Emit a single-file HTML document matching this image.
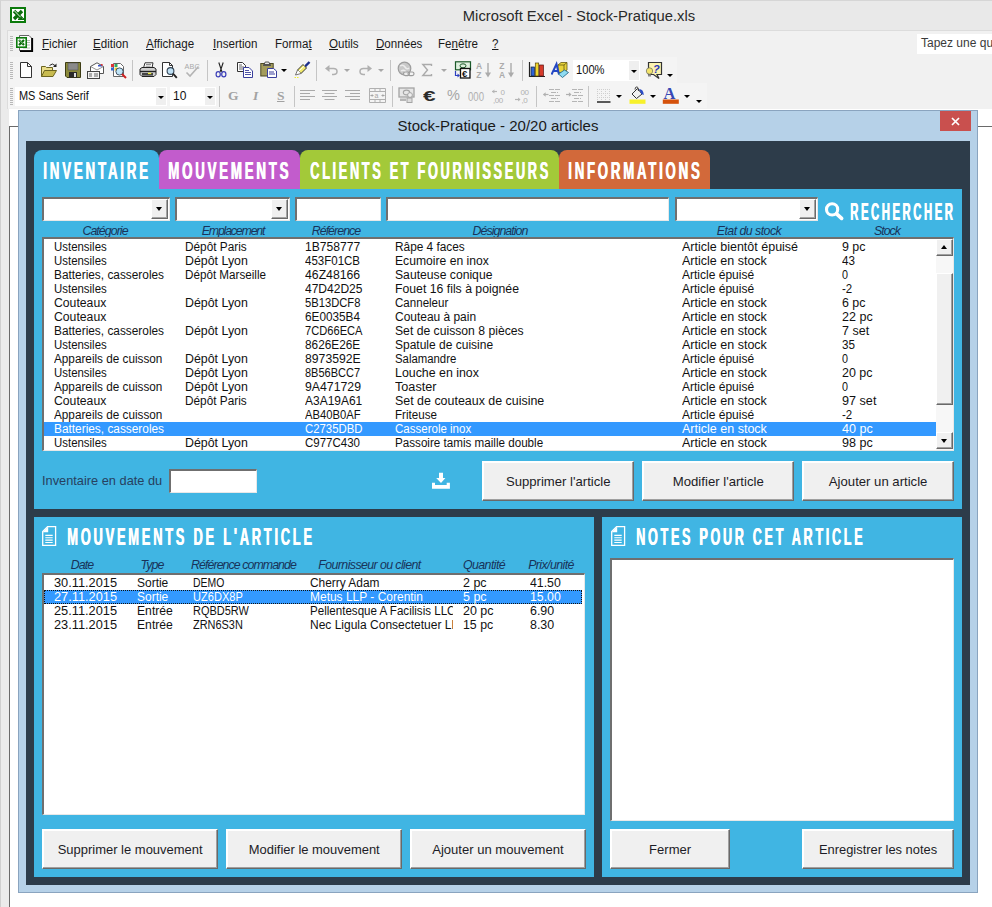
<!DOCTYPE html>
<html><head><meta charset="utf-8">
<style>
*{box-sizing:border-box;margin:0;padding:0}
html,body{width:992px;height:907px;overflow:hidden;background:#fff}
body{font-family:"Liberation Sans",sans-serif;position:relative;color:#000}
.abs{position:absolute}
#titlebar{left:0;top:0;width:992px;height:31px;background:#e9e9e9;border-top:1px solid #d6d6d6;border-left:1px solid #d2d2d2}
#title{left:0;top:0;width:992px;height:31px}
#chrome{left:7px;top:30px;width:985px;height:79px;background:#f1f1f1;border-left:1px solid #dcdcdc;border-top:1px solid #dcdcdc}
#leftframe{left:0;top:30px;width:9px;height:877px;background:#ebebeb;border-left:1px solid #cfcfcf}
.menu{top:37px;font-size:12px;color:#1a1a1a;white-space:nowrap;transform-origin:0 0;transform:scaleX(0.965)}
.menu u{text-decoration:underline;text-underline-offset:1px}
.grip{left:10px;width:3px;background:repeating-linear-gradient(to bottom,#b9b9b9 0,#b9b9b9 1px,transparent 1px,transparent 2px)}
.sep{width:1px;background:#c5c5c5}
.tbx{background:#fff;height:19px;font-size:12px;padding:2px 0 0 3px;white-space:nowrap;color:#111}
.dd{width:0;height:0;border-left:3px solid transparent;border-right:3px solid transparent;border-top:3px solid #000}
/* dialog */
#dlg{left:18px;top:110px;width:960px;height:783px;background:#b6d1e8;border:1px solid #8aa4bf}
#dlgtitle{left:18px;top:117px;width:960px;text-align:center;font-size:15px;color:#1a1a1a}
#close{left:940px;top:111px;width:31px;height:20px;background:#c9504e}
#dark{left:26px;top:141px;width:944px;height:744px;background:#2d3c4a}
.blue{background:#40b5e3}
.tab{top:150px;height:39px;border-radius:8px 8px 0 0}
.hl{color:#fff;font-weight:bold;white-space:nowrap;transform-origin:0 0;line-height:1;letter-spacing:5.0px;text-shadow:1.0px 0 0 #fff}
.sunk{background:#fff;border-top:2px solid #6f6f6f;border-left:2px solid #6f6f6f;border-right:1px solid #e8e8e8;border-bottom:1px solid #e8e8e8}
.cbtn{top:0;right:1px;width:17px;height:20px;background:#f0f0f0;border:1px solid #fff;border-right-color:#6a6a6a;border-bottom-color:#6a6a6a;box-shadow:inset -1px -1px 0 #a3a3a3}
.cbtn i{position:absolute;left:4px;top:7px;width:0;height:0;border-left:3.5px solid transparent;border-right:3.5px solid transparent;border-top:4px solid #000}
.lab{font-style:italic;font-size:12.4px;color:#18335a;white-space:nowrap;text-align:center;letter-spacing:-0.95px}
.lb{font-size:12px;line-height:14px;white-space:nowrap;color:#111}
.lb div{position:absolute;left:0;height:14px}
.lb span{position:absolute;top:0;transform-origin:0 0}
.btn{background:#f0f0f0;border:1px solid #fff;border-right-color:#696969;border-bottom-color:#696969;font-size:13.1px;color:#1c1c26;text-align:center;white-space:nowrap;box-shadow:inset -1px -1px 0 #a0a0a0,inset 1px 1px 0 #fff}
.sb{width:17px;background:#f0f0f0;border:1px solid #fff;border-right-color:#696969;border-bottom-color:#696969;box-shadow:inset -1px -1px 0 #a0a0a0}
.sb i{position:absolute;left:4px;width:0;height:0;border-left:3.5px solid transparent;border-right:3.5px solid transparent}
.sb i.up{top:5px;border-bottom:4px solid #000}
.sb i.dn{top:6px;border-top:4px solid #000}
.btn span{display:inline-block}
</style></head><body>
<!-- EXCEL CHROME -->
<div class="abs" id="titlebar"></div>
<div class="abs" id="leftframe"></div>
<div class="abs" id="chrome"></div>
<div class="abs" style="left:8px;top:57px;width:669px;height:26px;background:#f4f4f4"></div>
<div class="abs" style="left:8px;top:83px;width:699px;height:25px;background:#f4f4f4"></div>
<svg class="abs" style="left:10px;top:7px" width="16" height="16" viewBox="0 0 16 16"><rect width="16" height="16" fill="#0b7a0b"/><rect x="2" y="2" width="12" height="12" fill="#fff"/><path d="M4 4 L12 12 M12 4 L4 12" stroke="#0b6e0b" stroke-width="3.4"/><path d="M8 12.2 H14 V11" stroke="#0b6e0b" stroke-width="1.6" fill="none"/><path d="M4.2 3.6 L10.6 10.2" stroke="#fff" stroke-width="0.9"/></svg>
<div class="abs" id="title" style="text-align:center;font-size:15.4px;line-height:31px;color:#2a2a2a;padding-left:166px;transform:scaleX(0.96);transform-origin:579px 0">Microsoft Excel - Stock-Pratique.xls</div>
<div class="abs grip" style="top:36px;height:15px"></div>
<div class="abs grip" style="top:62px;height:17px"></div>
<div class="abs grip" style="top:88px;height:17px"></div>
<svg class="abs" style="left:16px;top:34px" width="18" height="19" viewBox="0 0 18 19"><path d="M3.5 1.5 H13 L15.5 4 V16.5 H3.5 Z" fill="#fbfbfb" stroke="#555" stroke-width="0.9"/><path d="M4 17.2 H16.2 V4" stroke="#000" stroke-width="1.8" fill="none"/><path d="M11 6.5h3M11 8.5h3M11 11h3M7 14h7" stroke="#aab2aa" stroke-width="0.9"/><rect x="0.8" y="3.8" width="9.4" height="9.4" fill="#fff" stroke="#0b7a0b" stroke-width="1.6"/><path d="M3 6 L8 11 M8 6 L3 11" stroke="#0b6e0b" stroke-width="2.2"/><path d="M3.2 5.8 L7 9.6" stroke="#fff" stroke-width="0.6"/></svg>
<div class="abs menu" style="left:42px"><u>F</u>ichier</div>
<div class="abs menu" style="left:93px"><u>E</u>dition</div>
<div class="abs menu" style="left:146px"><u>A</u>ffichage</div>
<div class="abs menu" style="left:213px"><u>I</u>nsertion</div>
<div class="abs menu" style="left:275px">Forma<u>t</u></div>
<div class="abs menu" style="left:329px"><u>O</u>utils</div>
<div class="abs menu" style="left:376px"><u>D</u>onnées</div>
<div class="abs menu" style="left:438px">Fe<u>n</u>être</div>
<div class="abs menu" style="left:492px"><u>?</u></div>
<div class="abs" style="left:917px;top:34px;width:75px;height:20px;background:#fff"></div>
<div class="abs" style="left:921px;top:36px;font-size:12px;color:#3a3a3a;white-space:nowrap">Tapez une qu</div>
<!-- separators row1 -->
<div class="abs sep" style="left:132px;top:60px;height:21px"></div>
<div class="abs sep" style="left:207px;top:60px;height:21px"></div>
<div class="abs sep" style="left:316px;top:60px;height:21px"></div>
<div class="abs sep" style="left:390px;top:60px;height:21px"></div>
<div class="abs sep" style="left:522px;top:60px;height:21px"></div>
<!-- separators row2 -->
<div class="abs sep" style="left:219px;top:86px;height:21px"></div>
<div class="abs sep" style="left:294px;top:86px;height:21px"></div>
<div class="abs sep" style="left:392px;top:86px;height:21px"></div>
<div class="abs sep" style="left:536px;top:86px;height:21px"></div>
<div class="abs sep" style="left:588px;top:86px;height:21px"></div>
<!-- combos -->
<div class="abs tbx" style="left:15px;top:87px;width:152px"><span style="display:inline-block;font-size:13px;transform:scaleX(0.84);transform-origin:0 0;margin-left:1px;margin-top:-1px">MS Sans Serif</span></div>
<div class="abs" style="left:156px;top:88px;width:10px;height:17px;background:#efefef"></div><div class="abs dd" style="left:158px;top:96px"></div>
<div class="abs tbx" style="left:170px;top:87px;width:46px">10</div>
<div class="abs" style="left:205px;top:88px;width:10px;height:17px;background:#efefef"></div><div class="abs dd" style="left:207px;top:96px"></div>
<div class="abs tbx" style="left:573px;top:60px;width:67px;height:21px;padding-top:3px"><span style="display:inline-block;transform:scaleX(0.93);transform-origin:0 0">100%</span></div>
<div class="abs" style="left:629px;top:61px;width:10px;height:19px;background:#efefef"></div><div class="abs dd" style="left:631px;top:70px"></div>
<!-- dropdown arrows -->
<div class="abs dd" style="left:281px;top:69px"></div>
<div class="abs dd" style="left:344px;top:69px;border-top-color:#a8a8a8"></div>
<div class="abs dd" style="left:378px;top:69px;border-top-color:#a8a8a8"></div>
<div class="abs dd" style="left:441px;top:69px;border-top-color:#a8a8a8"></div>
<div class="abs dd" style="left:667px;top:74px"></div>
<div class="abs dd" style="left:616px;top:95px"></div>
<div class="abs dd" style="left:650px;top:95px"></div>
<div class="abs dd" style="left:684px;top:95px"></div>
<div class="abs dd" style="left:696px;top:100px"></div>
<!-- row1 icons -->
<svg class="abs" style="left:19px;top:62px" width="16" height="16" viewBox="0 0 16 16"><path d="M1.5 0.5 H8.5 L12.5 4.5 V15.5 H1.5 Z" fill="#fff" stroke="#333"/><path d="M8.5 0.5 V4.5 H12.5" fill="none" stroke="#333"/></svg>
<svg class="abs" style="left:40px;top:62px" width="18" height="16" viewBox="0 0 18 16"><path d="M1.5 14.5 V4.5 H5.5 L6.5 5.5 H12.5 V8" fill="#e9dc8a" stroke="#6b6420"/><path d="M1.5 14.5 L4.5 8.5 H16.5 L13 14.5 Z" fill="#c8bb4f" stroke="#6b6420"/><path d="M9.5 3.5 Q12.5 0.5 15 3.5" fill="none" stroke="#222"/><path d="M16.5 1.5 V5 H13 Z" fill="#222"/></svg>
<svg class="abs" style="left:65px;top:62px" width="16" height="16" viewBox="0 0 16 16"><path d="M0.5 0.5 H15.5 V15.5 H2 L0.5 14 Z" fill="#8b8a3b" stroke="#3d3c14"/><rect x="3" y="1" width="10" height="7" fill="#8a8a8a" stroke="#555" stroke-width="0.6"/><rect x="4" y="10" width="8" height="5.5" fill="#2a2a2a"/><rect x="9" y="11" width="2" height="4" fill="#ddd"/></svg>
<svg class="abs" style="left:87px;top:62px" width="18" height="17" viewBox="0 0 18 17"><path d="M3.5 9 V4.5 L10 0.8 L16.5 4.5 V11.5 H12" fill="#fff" stroke="#555"/><path d="M3.5 4.5 L10 8 L16.5 4.5" fill="none" stroke="#777" stroke-width="0.8"/><rect x="11" y="3" width="4" height="1.5" fill="#3a56c8"/><rect x="14" y="2" width="1.6" height="1.6" fill="#d33"/><rect x="0.5" y="9.5" width="12" height="7" fill="#f4f4f4" stroke="#444"/><path d="M2 12h3M2 14h3M7 12h4M7 14h4" stroke="#555" stroke-width="0.9"/></svg>
<svg class="abs" style="left:110px;top:62px" width="18" height="17" viewBox="0 0 18 17"><path d="M3.5 1.5 H10.5 L13.5 4.5 V14.5 H3.5 Z" fill="#fff" stroke="#666"/><rect x="1" y="2" width="3" height="3" fill="#d33"/><rect x="4.5" y="2" width="3" height="3" fill="#3a6"/><rect x="1" y="5.5" width="3" height="3" fill="#36c"/><rect x="4.5" y="5.5" width="3" height="3" fill="#ec3"/><circle cx="9.5" cy="9.5" r="3.6" fill="#bfe4f7" stroke="#456"/><path d="M12 12 L16 16" stroke="#c22" stroke-width="2"/></svg>
<svg class="abs" style="left:139px;top:62px" width="18" height="16" viewBox="0 0 18 16"><path d="M4.5 6 L6 0.8 H14 L13 6" fill="#fff" stroke="#333"/><path d="M7 2.5h5M6.6 4.2h5" stroke="#777" stroke-width="0.8"/><path d="M1 7 L3 5.5 H15 L17 7 V12.5 L15 14.5 H3 L1 12.5 Z" fill="#cfcfcf" stroke="#222"/><path d="M1 9.5 H17" stroke="#222" stroke-width="1.4"/><rect x="3" y="11" width="11" height="2.6" fill="#444"/><rect x="9" y="10.8" width="3.2" height="1.3" fill="#ee3"/></svg>
<svg class="abs" style="left:161px;top:62px" width="18" height="17" viewBox="0 0 18 17"><path d="M1.5 0.5 H8.5 L11.5 3.5 V14.5 H1.5 Z" fill="#fff" stroke="#333"/><path d="M8.5 0.5 V3.5 H11.5" fill="none" stroke="#333"/><circle cx="9.5" cy="9" r="3.4" fill="#bfe0f4" stroke="#345" stroke-width="1.1"/><path d="M12 11.7 L15.8 15.8" stroke="#222" stroke-width="1.9"/></svg>
<svg class="abs" style="left:184px;top:61px" width="18" height="17" viewBox="0 0 18 17"><text x="0.5" y="7.5" font-family="Liberation Sans" font-size="7.2" fill="#a9a9a9" letter-spacing="0.2">ABC</text><path d="M2.5 11.5 L6 15 L14.5 5.5" fill="none" stroke="#b4b4b4" stroke-width="1.6"/></svg>
<svg class="abs" style="left:215px;top:62px" width="12" height="16" viewBox="0 0 12 16"><path d="M3.8 0.5 L7 10 M8.2 0.5 L5 10" stroke="#222" stroke-width="1.1" fill="none"/><ellipse cx="3.2" cy="12.3" rx="2.1" ry="2.6" fill="none" stroke="#3b3fb8" stroke-width="1.2"/><ellipse cx="8.8" cy="12.3" rx="2.1" ry="2.6" fill="none" stroke="#3b3fb8" stroke-width="1.2"/></svg>
<svg class="abs" style="left:237px;top:62px" width="17" height="16" viewBox="0 0 17 16"><path d="M0.5 0.5 H5.5 L8.5 3.5 V9.5 H0.5 Z" fill="#fff" stroke="#333"/><path d="M2 3h3M2 5h5M2 7h5" stroke="#555" stroke-width="0.9"/><path d="M6.5 5.5 H12 L15.5 9 V15.5 H6.5 Z" fill="#fff" stroke="#3a3f9c"/><path d="M8 8.5h4M8 10.5h6M8 12.5h6" stroke="#3a3f9c" stroke-width="0.9"/></svg>
<svg class="abs" style="left:260px;top:61px" width="18" height="17" viewBox="0 0 18 17"><rect x="0.8" y="2.5" width="12.4" height="12.5" fill="#a39c5c" stroke="#4d4a26"/><path d="M4 3.5 L5.2 1 H8.8 L10 3.5 Z" fill="#e6e6e6" stroke="#333" stroke-width="0.8"/><rect x="3" y="3.4" width="8" height="1.6" fill="#555"/><path d="M7.5 7.5 H13.5 L16.5 10 V16.5 H7.5 Z" fill="#fff" stroke="#3a3f9c"/><path d="M9 11h5M9 13h6" stroke="#3a3f9c" stroke-width="1"/></svg>
<svg class="abs" style="left:294px;top:61px" width="18" height="18" viewBox="0 0 18 18"><path d="M11 5.5 L15.5 1" stroke="#1b2f8c" stroke-width="2.4"/><path d="M3.5 9 L9 3.5 L12.5 7 L7 12.5 Z" fill="#f2ea6a" stroke="#333"/><path d="M4.5 10.5 L10.5 4.8" stroke="#fff" stroke-width="1"/><path d="M3.5 9 L1.5 14 L7 12.5" fill="#fff" stroke="#555" stroke-width="0.8"/><path d="M0.5 16.5h5" stroke="#ee3" stroke-width="1" stroke-dasharray="1.5 1"/></svg>
<svg class="abs" style="left:324px;top:63px" width="16" height="14" viewBox="0 0 16 14"><path d="M3.5 5.5 H9.5 Q13 5.5 13 8.5 Q13 11.5 9.5 11.5 H8" fill="none" stroke="#b0b0b0" stroke-width="1.5"/><path d="M1 5.5 L5.5 2 V9 Z" fill="#b0b0b0"/></svg>
<svg class="abs" style="left:357px;top:63px" width="16" height="14" viewBox="0 0 16 14"><path d="M12.5 5.5 H6.5 Q3 5.5 3 8.5 Q3 11.5 6.5 11.5 H8" fill="none" stroke="#b0b0b0" stroke-width="1.5"/><path d="M15 5.5 L10.5 2 V9 Z" fill="#b0b0b0"/></svg>
<svg class="abs" style="left:397px;top:61px" width="18" height="18" viewBox="0 0 18 18"><circle cx="7.5" cy="7.5" r="6.3" fill="#c9c9c9" stroke="#9d9d9d" stroke-width="1.2"/><path d="M3 5 Q6 3 8 6 T12 7 M4 10 Q7 8 9 11" stroke="#ececec" stroke-width="1.5" fill="none"/><rect x="6.5" y="11" width="6" height="3.6" rx="1.8" fill="#ededed" stroke="#9d9d9d" stroke-width="1.2"/><rect x="11" y="11" width="6" height="3.6" rx="1.8" fill="none" stroke="#9d9d9d" stroke-width="1.2"/></svg>
<svg class="abs" style="left:421px;top:62px" width="13" height="16" viewBox="0 0 13 16"><path d="M10.5 4 V2.5 H1.8 L6.5 8 L1.8 13.5 H10.5 V12" fill="none" stroke="#ababab" stroke-width="1.4"/></svg>
<svg class="abs" style="left:453px;top:61px" width="19" height="18" viewBox="0 0 19 18"><rect x="2.5" y="0.8" width="15" height="8" fill="#dff0df" stroke="#1c5a2a" stroke-width="1.2"/><ellipse cx="10" cy="4.8" rx="3" ry="2" fill="none" stroke="#1c5a2a"/><rect x="7.5" y="7.5" width="9.5" height="9.5" fill="#fff" stroke="#111" stroke-width="1.3"/><text x="9" y="15.8" font-family="Liberation Sans" font-weight="bold" font-size="9.5" fill="#111">€</text><path d="M2.5 10 V14.5 H5" fill="none" stroke="#2b3fc0" stroke-width="1.2"/><path d="M4.5 12.5 L7 14.5 L4.5 16.5 Z" fill="#2b3fc0"/></svg>
<svg class="abs" style="left:476px;top:61px" width="17" height="18" viewBox="0 0 17 18"><text x="0" y="8" font-family="Liberation Sans" font-weight="bold" font-size="8.5" fill="#ababab">A</text><text x="0.3" y="16.5" font-family="Liberation Sans" font-weight="bold" font-size="8.5" fill="#ababab">Z</text><path d="M12 2 V13" stroke="#ababab" stroke-width="1.4"/><path d="M9 11.5 H15 L12 16.5 Z" fill="#ababab"/></svg>
<svg class="abs" style="left:499px;top:61px" width="17" height="18" viewBox="0 0 17 18"><text x="0.3" y="8" font-family="Liberation Sans" font-weight="bold" font-size="8.5" fill="#ababab">Z</text><text x="0" y="16.5" font-family="Liberation Sans" font-weight="bold" font-size="8.5" fill="#ababab">A</text><path d="M12 2 V13" stroke="#ababab" stroke-width="1.4"/><path d="M9 11.5 H15 L12 16.5 Z" fill="#ababab"/></svg>
<svg class="abs" style="left:528px;top:61px" width="18" height="17" viewBox="0 0 18 17"><path d="M1.5 1 V15.5 H17" fill="none" stroke="#222" stroke-width="1.2"/><rect x="3" y="6" width="3.4" height="9" fill="#2d62d6" stroke="#123" stroke-width="0.7"/><rect x="7.3" y="2" width="3.4" height="13" fill="#f0d529" stroke="#541" stroke-width="0.7"/><rect x="11.6" y="4" width="3.8" height="11" fill="#d63a2a" stroke="#511" stroke-width="0.7"/></svg>
<svg class="abs" style="left:551px;top:61px" width="19" height="18" viewBox="0 0 19 18"><path d="M7 4 L10 1.5 H16 V9 L13 11.5 H7 Z" fill="#e8d33a" stroke="#665a10" stroke-width="0.8"/><path d="M7 4 H13 V11.5 M13 4 L16 1.5" fill="none" stroke="#665a10" stroke-width="0.8"/><path d="M0.5 13.5 L5.5 3 L8 13.5 M2.3 10 H7" fill="none" stroke="#2447c4" stroke-width="2"/><path d="M7.5 13 L13.5 9 L17.5 11.5 L11.5 16.5 Z" fill="#8fdcf2" stroke="#2a6d8c" stroke-width="0.9"/></svg>
<svg class="abs" style="left:645px;top:61px" width="19" height="19" viewBox="0 0 19 19"><path d="M3.5 1.5 H16.5 V13.5 H12 L14 17.5 L8.5 13.5 H3.5 Z" fill="#fbf3b0" stroke="#333" stroke-width="1.2"/><text x="8" y="11.5" font-family="Liberation Sans" font-weight="bold" font-style="italic" font-size="11" fill="#2a35b8">?</text><circle cx="4.5" cy="10" r="3.2" fill="#f3e36a" stroke="#776" stroke-width="0.8"/><path d="M3 13.5 h3 v2 h-3z" fill="#888"/></svg>
<!-- row2 icons -->
<div class="abs" style="left:228px;top:88px;font:bold 13.5px 'Liberation Serif',serif;color:#a2a2a2">G</div>
<div class="abs" style="left:253px;top:88px;font:italic bold 13.5px 'Liberation Serif',serif;color:#a2a2a2">I</div>
<div class="abs" style="left:277px;top:88px;font:bold 13.5px 'Liberation Serif',serif;color:#a2a2a2;text-decoration:underline">S</div>
<svg class="abs" style="left:300px;top:89px" width="16" height="13" viewBox="0 0 16 13"><path d="M0 1.5h15M0 4.5h10M0 7.5h15M0 10.5h10" stroke="#a9a9a9" stroke-width="1.1"/></svg>
<svg class="abs" style="left:322px;top:89px" width="16" height="13" viewBox="0 0 16 13"><path d="M0 1.5h15M2.5 4.5h10M0 7.5h15M2.5 10.5h10" stroke="#a9a9a9" stroke-width="1.1"/></svg>
<svg class="abs" style="left:345px;top:89px" width="16" height="13" viewBox="0 0 16 13"><path d="M0 1.5h15M5 4.5h10M0 7.5h15M5 10.5h10" stroke="#a9a9a9" stroke-width="1.1"/></svg>
<svg class="abs" style="left:369px;top:88px" width="18" height="15" viewBox="0 0 18 15"><path d="M0.5 0.5h16v14h-16zM0.5 3.5h16M0.5 11.5h16M6 0.5v3M11 0.5v3M6 11.5v3M11 11.5v3" fill="none" stroke="#b0b0b0"/><text x="5.5" y="10" font-family="Liberation Sans" font-size="7" fill="#a5a5a5">a</text><path d="M1.5 7.5h3M12.5 7.5h3" stroke="#a5a5a5"/><path d="M1.5 7.5l2-1.6v3.2zM15.5 7.5l-2-1.6v3.2z" fill="#a5a5a5"/></svg>
<svg class="abs" style="left:398px;top:87px" width="19" height="17" viewBox="0 0 19 17"><rect x="1" y="1" width="15" height="9" fill="#e6e6e6" stroke="#a4a4a4" stroke-width="1.3"/><ellipse cx="8.5" cy="5.5" rx="3.2" ry="2.4" fill="none" stroke="#a4a4a4" stroke-width="1.1"/><circle cx="12" cy="8" r="2.4" fill="#eee" stroke="#a4a4a4"/><rect x="2" y="11.5" width="6" height="2.5" fill="#b5b5b5"/><rect x="9" y="11" width="5" height="4.5" fill="#ddd" stroke="#a4a4a4"/></svg>
<div class="abs" style="left:423px;top:87px;font:bold 15px 'Liberation Sans',sans-serif;color:#2a2a2a;transform:scaleX(1.5);transform-origin:0 0">€</div>
<div class="abs" style="left:447px;top:87px;font:14.5px 'Liberation Sans',sans-serif;color:#a6a6a6">%</div>
<div class="abs" style="left:468px;top:90px;font:12px 'Liberation Sans',sans-serif;color:#b0b0b0;transform:scaleX(0.8);transform-origin:0 0">000</div>
<svg class="abs" style="left:491px;top:87px" width="19" height="17" viewBox="0 0 19 17"><path d="M1 4.5h5" stroke="#b5b5b5" stroke-width="1.2"/><path d="M1 4.5l2.4-2v4z" fill="#b5b5b5"/><text x="9.5" y="7.5" font-family="Liberation Sans" font-size="8" fill="#b0b0b0">0</text><text x="2" y="16" font-family="Liberation Sans" font-size="8" fill="#b0b0b0" letter-spacing="-0.4">,00</text></svg>
<svg class="abs" style="left:514px;top:87px" width="19" height="17" viewBox="0 0 19 17"><text x="6.5" y="7.5" font-family="Liberation Sans" font-size="8" fill="#b0b0b0" letter-spacing="-0.4">00</text><path d="M1 12.5h5" stroke="#b5b5b5" stroke-width="1.2"/><path d="M6.5 12.5l-2.4-2v4z" fill="#b5b5b5"/><text x="7.5" y="16" font-family="Liberation Sans" font-size="8" fill="#b0b0b0" letter-spacing="-0.4">,0</text></svg>
<svg class="abs" style="left:543px;top:88px" width="18" height="15" viewBox="0 0 18 15"><path d="M6 1.5h11M8 4.5h7M6 7.5h11M8 10.5h7M6 13.5h11" stroke="#b5b5b5" stroke-width="1.1" stroke-dasharray="5 1"/><path d="M0.5 6.5h5" stroke="#b0b0b0" stroke-width="1.2"/><path d="M0 6.5l2.6-2.2v4.4z" fill="#b0b0b0"/></svg>
<svg class="abs" style="left:566px;top:88px" width="18" height="15" viewBox="0 0 18 15"><path d="M6 1.5h11M8 4.5h7M6 7.5h11M8 10.5h7M6 13.5h11" stroke="#b5b5b5" stroke-width="1.1" stroke-dasharray="5 1"/><path d="M0 6.5h5" stroke="#b0b0b0" stroke-width="1.2"/><path d="M5.5 6.5l-2.6-2.2v4.4z" fill="#b0b0b0"/></svg>
<svg class="abs" style="left:597px;top:88px" width="15" height="16" viewBox="0 0 15 16"><path d="M0.5 1v12M4.5 1v12M8.5 1v12M12.5 1v12M0 1.5h13M0 5.5h13M0 9.5h13" stroke="#cfcfcf" stroke-width="1" stroke-dasharray="1 1"/><path d="M0 14h13.5" stroke="#333" stroke-width="1.6"/></svg>
<svg class="abs" style="left:629px;top:86px" width="18" height="19" viewBox="0 0 18 19"><path d="M3 8 L8.5 2.5 L13 8 L7.5 12.5 Z" fill="#f2f2f2" stroke="#333" stroke-width="1"/><path d="M6 3.5 Q6 0.8 8 0.8 Q9.5 0.8 9.5 5" fill="none" stroke="#333" stroke-width="0.9"/><path d="M10 3 Q14.5 3 14.8 9 L12.3 8 Z" fill="#2b4cc6"/><rect x="0.5" y="13.5" width="16" height="4.3" fill="#f7f12b"/></svg>
<svg class="abs" style="left:662px;top:86px" width="18" height="19" viewBox="0 0 18 19"><text x="1.5" y="12.5" font-family="Liberation Serif" font-weight="bold" font-size="16.5" fill="#3848b4">A</text><rect x="0.8" y="13.5" width="16" height="4.3" fill="#d5520c"/></svg>


<!-- sheet behind -->
<div class="abs" style="left:10px;top:109px;width:982px;height:798px;background:#fff"></div>
<div class="abs" style="left:9px;top:126px;width:983px;height:781px;border-left:1px solid #6a6a6a;border-top:1px solid #6a6a6a"></div>
<!-- DIALOG -->
<div class="abs" id="dlg"></div>
<div class="abs" id="dlgtitle">Stock-Pratique - 20/20 articles</div>
<div class="abs" id="close"><svg width="31" height="20" viewBox="0 0 31 20"><path d="M12 7 L19 14 M19 7 L12 14" stroke="#fff" stroke-width="1.7" fill="none"/></svg></div>
<div class="abs" id="dark"></div>
<div class="abs blue tab" style="left:34px;width:125px"></div>
<div class="abs tab" style="left:159px;width:141px;background:#c25ccc"></div>
<div class="abs tab" style="left:300px;width:259px;background:#a3c939"></div>
<div class="abs tab" style="left:559px;width:151px;background:#d2693a"></div>

<div class="abs blue" style="left:34px;top:189px;width:928px;height:320px"></div>
<div class="abs blue" style="left:34px;top:517px;width:560px;height:360px"></div>
<div class="abs blue" style="left:602px;top:517px;width:360px;height:360px"></div>
<div class="abs hl" id="h1" style="left:43.39px;top:158.8px;font-size:24px;transform:scaleX(0.5561)">INVENTAIRE</div>
<div class="abs hl" id="h2" style="left:168.49px;top:158.7px;font-size:24px;transform:scaleX(0.554)">MOUVEMENTS</div>
<div class="abs hl" id="h3" style="left:309.97px;top:158.7px;font-size:24px;transform:scaleX(0.5318)">CLIENTS ET FOURNISSEURS</div>
<div class="abs hl" id="h4" style="left:568.3px;top:158.7px;font-size:24px;transform:scaleX(0.5511)">INFORMATIONS</div>
<div class="abs hl" id="h5" style="left:849.9px;top:200.7px;font-size:22.5px;transform:scale(0.5039,1.035)">RECHERCHER</div>
<div class="abs hl" id="h6" style="left:66.65px;top:526.0px;font-size:23.5px;transform:scaleX(0.549)">MOUVEMENTS DE L'ARTICLE</div>
<div class="abs hl" id="h7" style="left:635.83px;top:526.0px;font-size:23.5px;transform:scaleX(0.5371)">NOTES POUR CET ARTICLE</div>
<!-- filters -->
<div class="abs sunk" style="left:42px;top:197px;width:128px;height:24px"><div class="abs cbtn"><i></i></div></div>
<div class="abs sunk" style="left:175px;top:197px;width:115px;height:24px"><div class="abs cbtn"><i></i></div></div>
<div class="abs sunk" style="left:295px;top:197px;width:86px;height:24px"></div>
<div class="abs sunk" style="left:386px;top:197px;width:283px;height:24px"></div>
<div class="abs sunk" style="left:675px;top:197px;width:143px;height:24px"><div class="abs cbtn"><i></i></div></div>
<svg class="abs" style="left:824px;top:202px" width="21" height="20" viewBox="0 0 21 20"><circle cx="8.1" cy="7.4" r="5.6" fill="none" stroke="#fff" stroke-width="3.1"/><path d="M12.6 11.8 L17.6 16.4" stroke="#fff" stroke-width="3.7" stroke-linecap="round"/></svg>
<div class="abs lab" style="left:55px;top:224px;width:100px">Catégorie</div>
<div class="abs lab" style="left:183px;top:224px;width:100px;letter-spacing:-1.2px">Emplacement</div>
<div class="abs lab" style="left:286px;top:224px;width:100px">Référence</div>
<div class="abs lab" style="left:450px;top:224px;width:100px">Désignation</div>
<div class="abs lab" style="left:699px;top:224px;width:100px;letter-spacing:-0.55px">Etat du stock</div>
<div class="abs lab" style="left:837px;top:224px;width:100px">Stock</div>
<!-- list -->
<div class="abs sunk lb" style="left:42px;top:237px;width:912px;height:214px">
<div style="top:1px;width:892px"><span style="left:10px;transform:scaleX(0.952)">Ustensiles</span><span style="left:141px;transform:scaleX(0.984)">Dépôt Paris</span><span style="left:261px;transform:scaleX(1.009)">1B758777</span><span style="left:351px;transform:scaleX(0.987)">Râpe 4 faces</span><span style="left:638px;transform:scaleX(1.042)">Article bientôt épuisé</span><span style="left:798px;transform:scaleX(1.036)">9 pc</span></div>
<div style="top:15px;width:892px"><span style="left:10px;transform:scaleX(0.952)">Ustensiles</span><span style="left:141px;transform:scaleX(1.032)">Dépôt Lyon</span><span style="left:261px;transform:scaleX(0.959)">453F01CB</span><span style="left:351px;transform:scaleX(1.012)">Ecumoire en inox</span><span style="left:638px;transform:scaleX(1.043)">Article en stock</span><span style="left:798px;transform:scaleX(0.973)">43</span></div>
<div style="top:29px;width:892px"><span style="left:10px;transform:scaleX(0.988)">Batteries, casseroles</span><span style="left:141px;transform:scaleX(0.972)">Dépôt Marseille</span><span style="left:261px;transform:scaleX(1.021)">46Z48166</span><span style="left:351px;transform:scaleX(1.014)">Sauteuse conique</span><span style="left:638px;transform:scaleX(1.001)">Article épuisé</span><span style="left:798px;transform:scaleX(0.897)">0</span></div>
<div style="top:43px;width:892px"><span style="left:10px;transform:scaleX(0.952)">Ustensiles</span><span style="left:261px;transform:scaleX(1.002)">47D42D25</span><span style="left:351px;transform:scaleX(1.021)">Fouet 16 fils à poignée</span><span style="left:638px;transform:scaleX(1.001)">Article épuisé</span><span style="left:798px;transform:scaleX(0.956)">-2</span></div>
<div style="top:57px;width:892px"><span style="left:10px;transform:scaleX(1.018)">Couteaux</span><span style="left:141px;transform:scaleX(1.032)">Dépôt Lyon</span><span style="left:261px;transform:scaleX(0.933)">5B13DCF8</span><span style="left:351px;transform:scaleX(0.963)">Canneleur</span><span style="left:638px;transform:scaleX(1.043)">Article en stock</span><span style="left:798px;transform:scaleX(1.036)">6 pc</span></div>
<div style="top:71px;width:892px"><span style="left:10px;transform:scaleX(1.018)">Couteaux</span><span style="left:261px;transform:scaleX(0.981)">6E0035B4</span><span style="left:351px;transform:scaleX(0.996)">Couteau à pain</span><span style="left:638px;transform:scaleX(1.043)">Article en stock</span><span style="left:798px;transform:scaleX(1.046)">22 pc</span></div>
<div style="top:85px;width:892px"><span style="left:10px;transform:scaleX(0.988)">Batteries, casseroles</span><span style="left:141px;transform:scaleX(1.032)">Dépôt Lyon</span><span style="left:261px;transform:scaleX(0.927)">7CD66ECA</span><span style="left:351px;transform:scaleX(1.015)">Set de cuisson 8 pièces</span><span style="left:638px;transform:scaleX(1.043)">Article en stock</span><span style="left:798px;transform:scaleX(1.042)">7 set</span></div>
<div style="top:99px;width:892px"><span style="left:10px;transform:scaleX(0.952)">Ustensiles</span><span style="left:261px;transform:scaleX(0.985)">8626E26E</span><span style="left:351px;transform:scaleX(1.0)">Spatule de cuisine</span><span style="left:638px;transform:scaleX(1.043)">Article en stock</span><span style="left:798px;transform:scaleX(0.973)">35</span></div>
<div style="top:113px;width:892px"><span style="left:10px;transform:scaleX(0.979)">Appareils de cuisson</span><span style="left:141px;transform:scaleX(1.032)">Dépôt Lyon</span><span style="left:261px;transform:scaleX(1.018)">8973592E</span><span style="left:351px;transform:scaleX(0.947)">Salamandre</span><span style="left:638px;transform:scaleX(1.001)">Article épuisé</span><span style="left:798px;transform:scaleX(0.897)">0</span></div>
<div style="top:127px;width:892px"><span style="left:10px;transform:scaleX(0.952)">Ustensiles</span><span style="left:141px;transform:scaleX(1.032)">Dépôt Lyon</span><span style="left:261px;transform:scaleX(0.916)">8B56BCC7</span><span style="left:351px;transform:scaleX(1.031)">Louche en inox</span><span style="left:638px;transform:scaleX(1.043)">Article en stock</span><span style="left:798px;transform:scaleX(1.039)">20 pc</span></div>
<div style="top:141px;width:892px"><span style="left:10px;transform:scaleX(0.979)">Appareils de cuisson</span><span style="left:141px;transform:scaleX(1.032)">Dépôt Lyon</span><span style="left:261px;transform:scaleX(1.023)">9A471729</span><span style="left:351px;transform:scaleX(1.054)">Toaster</span><span style="left:638px;transform:scaleX(1.001)">Article épuisé</span><span style="left:798px;transform:scaleX(0.897)">0</span></div>
<div style="top:155px;width:892px"><span style="left:10px;transform:scaleX(1.018)">Couteaux</span><span style="left:141px;transform:scaleX(0.984)">Dépôt Paris</span><span style="left:261px;transform:scaleX(0.998)">A3A19A61</span><span style="left:351px;transform:scaleX(1.036)">Set de couteaux de cuisine</span><span style="left:638px;transform:scaleX(1.043)">Article en stock</span><span style="left:798px;transform:scaleX(1.052)">97 set</span></div>
<div style="top:169px;width:892px"><span style="left:10px;transform:scaleX(0.979)">Appareils de cuisson</span><span style="left:261px;transform:scaleX(0.938)">AB40B0AF</span><span style="left:351px;transform:scaleX(0.969)">Friteuse</span><span style="left:638px;transform:scaleX(1.001)">Article épuisé</span><span style="left:798px;transform:scaleX(0.956)">-2</span></div>
<div style="top:183px;width:892px;background:#3399ff;color:#fff"><span style="left:10px;transform:scaleX(0.988)">Batteries, casseroles</span><span style="left:261px;transform:scaleX(0.947)">C2735DBD</span><span style="left:351px;transform:scaleX(0.96)">Casserole inox</span><span style="left:638px;transform:scaleX(1.043)">Article en stock</span><span style="left:798px;transform:scaleX(1.046)">40 pc</span></div>
<div style="top:197px;width:892px"><span style="left:10px;transform:scaleX(0.952)">Ustensiles</span><span style="left:141px;transform:scaleX(1.032)">Dépôt Lyon</span><span style="left:261px;transform:scaleX(0.959)">C977C430</span><span style="left:351px;transform:scaleX(0.97)">Passoire tamis maille double</span><span style="left:638px;transform:scaleX(1.043)">Article en stock</span><span style="left:798px;transform:scaleX(1.046)">98 pc</span></div>
<div class="abs" style="left:892px;top:0;width:17px;height:211px;background:#f7f7f7"></div>
<div class="abs sb" style="left:892px;top:0px;height:17px"><i class="up"></i></div>
<div class="abs sb" style="left:892px;top:34px;height:132px"></div>
<div class="abs sb" style="left:892px;top:193px;height:17px"><i class="dn"></i></div>
</div>
<!-- bottom row -->
<div class="abs" style="left:42px;top:473px;font-size:12.8px;color:#27415f;white-space:nowrap">Inventaire en date du</div>
<div class="abs sunk" style="left:169px;top:469px;width:88px;height:24px"></div>
<svg class="abs" style="left:432px;top:472px" width="18" height="17" viewBox="0 0 18 17"><path d="M7 0.7 h4 v5.3 h2.4 L9 11 L4.2 6 H7 Z" fill="#fff"/><path d="M0 10.8 h3 v2.3 h11.7 v-2.3 h3.2 V16.8 H0 Z" fill="#fff"/></svg>
<div class="abs btn" style="left:482px;top:461px;width:152px;height:40px;line-height:39px"><span style="transform:scaleX(1.002)">Supprimer l'article</span></div>
<div class="abs btn" style="left:642px;top:461px;width:152px;height:40px;line-height:39px"><span style="transform:scaleX(1.005)">Modifier l'article</span></div>
<div class="abs btn" style="left:802px;top:461px;width:152px;height:40px;line-height:39px"><span style="transform:scaleX(1.003)">Ajouter un article</span></div>

<!-- movements -->
<svg class="abs" style="left:42px;top:526px" width="15" height="20" viewBox="0 0 15 20"><path d="M5.6 0.7 H13.6 V19.3 H0.7 V5.6 Z" fill="none" stroke="#fff" stroke-width="1.3"/><path d="M0.7 6.2 L6.2 0.7 V6.2 Z" fill="#fff"/><path d="M3.3 9.4h7.4M3.3 11.7h7.4M3.3 14.1h7.4M3.3 16.5h7.4" stroke="#fff" stroke-width="1.1"/></svg>
<div class="abs lab" style="left:7px;top:558px;width:150px">Date</div>
<div class="abs lab" style="left:77px;top:558px;width:150px">Type</div>
<div class="abs lab" style="left:168.5px;top:558px;width:150px">Référence commande</div>
<div class="abs lab" style="left:294.5px;top:558px;width:150px;letter-spacing:-0.6px">Fournisseur ou client</div>
<div class="abs lab" style="left:409px;top:558px;width:150px;letter-spacing:-0.6px">Quantité</div>
<div class="abs lab" style="left:476px;top:558px;width:150px;letter-spacing:-0.6px">Prix/unité</div>
<div class="abs sunk lb" style="left:42px;top:573px;width:543px;height:242px">
<div style="top:1px;width:538px"><span style="left:10px;transform:scaleX(1.066)">30.11.2015</span><span style="left:93px;transform:scaleX(0.998)">Sortie</span><span style="left:149px;transform:scaleX(0.869)">DEMO</span><span style="left:266px;width:143px;overflow:hidden;height:14px;transform:scaleX(0.992)">Cherry Adam</span><span style="left:419px;transform:scaleX(1.04)">2 pc</span><span style="left:486px;transform:scaleX(1.026)">41.50</span></div>
<div style="top:15px;width:538px;background:#3399ff;color:#fff;outline:1px dotted #111;outline-offset:-1px"><span style="left:10px;transform:scaleX(1.066)">27.11.2015</span><span style="left:93px;transform:scaleX(0.998)">Sortie</span><span style="left:149px;transform:scaleX(0.922)">UZ6DX8P</span><span style="left:266px;width:143px;overflow:hidden;height:14px;transform:scaleX(0.998)">Metus LLP - Corentin</span><span style="left:419px;transform:scaleX(1.04)">5 pc</span><span style="left:486px;transform:scaleX(1.026)">15.00</span></div>
<div style="top:29px;width:538px"><span style="left:10px;transform:scaleX(1.066)">25.11.2015</span><span style="left:93px;transform:scaleX(1.015)">Entrée</span><span style="left:149px;transform:scaleX(0.913)">RQBD5RW</span><span style="left:266px;width:148px;overflow:hidden;height:14px;transform:scaleX(0.965)">Pellentesque A Facilisis LLC</span><span style="left:419px;transform:scaleX(1.039)">20 pc</span><span style="left:486px;transform:scaleX(1.036)">6.90</span></div>
<div style="top:43px;width:538px"><span style="left:10px;transform:scaleX(1.066)">23.11.2015</span><span style="left:93px;transform:scaleX(1.015)">Entrée</span><span style="left:149px;transform:scaleX(0.911)">ZRN6S3N</span><span style="left:266px;width:143px;overflow:hidden;height:14px">Nec Ligula Consectetuer LLC</span><span style="left:419px;transform:scaleX(1.029)">15 pc</span><span style="left:486px;transform:scaleX(1.036)">8.30</span></div>
</div>
<div class="abs btn" style="left:42px;top:829px;width:176px;height:40px;line-height:39px"><span style="transform:scaleX(0.991)">Supprimer le mouvement</span></div>
<div class="abs btn" style="left:226px;top:829px;width:176px;height:40px;line-height:39px"><span style="transform:scaleX(0.989)">Modifier le mouvement</span></div>
<div class="abs btn" style="left:410px;top:829px;width:176px;height:40px;line-height:39px"><span style="transform:scaleX(0.997)">Ajouter un mouvement</span></div>

<!-- notes -->
<svg class="abs" style="left:611px;top:526px" width="15" height="20" viewBox="0 0 15 20"><path d="M5.6 0.7 H13.6 V19.3 H0.7 V5.6 Z" fill="none" stroke="#fff" stroke-width="1.3"/><path d="M0.7 6.2 L6.2 0.7 V6.2 Z" fill="#fff"/><path d="M3.3 9.4h7.4M3.3 11.7h7.4M3.3 14.1h7.4M3.3 16.5h7.4" stroke="#fff" stroke-width="1.1"/></svg>
<div class="abs sunk" style="left:610px;top:558px;width:344px;height:263px"></div>
<div class="abs btn" style="left:610px;top:829px;width:120px;height:40px;line-height:39px"><span style="transform:scaleX(0.995)">Fermer</span></div>
<div class="abs btn" style="left:802px;top:829px;width:152px;height:40px;line-height:39px"><span style="transform:scaleX(0.983)">Enregistrer les notes</span></div>


</body></html>
